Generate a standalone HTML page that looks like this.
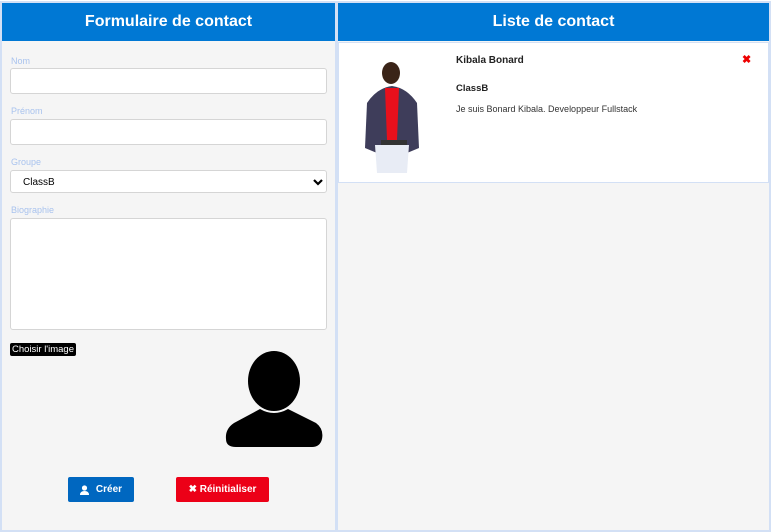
<!DOCTYPE html>
<html><head><meta charset="utf-8"><style>
*{box-sizing:border-box;margin:0;padding:0}
body{width:777px;height:532px;background:#fff;font-family:"Liberation Sans",sans-serif;position:relative;overflow:hidden}
.panel{position:absolute;top:1px;background:#f5f5f5;border:2px solid #d3e0f5}
.hdr{background:#0078d4;color:#fff;font-weight:bold;font-size:16px;text-align:center;height:38px;line-height:38px}
.lbl{position:absolute;left:9px;font-size:9px;color:#a9c3ee}
.inp{position:absolute;left:8px;width:317px;background:#fff;border:1px solid #d5d5d5;border-radius:3px}
.btn{position:absolute;top:474px;height:25px;color:#fff;font-size:10px;font-weight:bold;border-radius:2px;display:flex;align-items:center;justify-content:center;gap:7px}
</style></head><body>
<div class="panel" style="left:0;width:337px;height:531px">
 <div class="hdr">Formulaire de contact</div>
 <div class="lbl" style="top:53px">Nom</div>
 <div class="inp" style="top:65px;height:26px"></div>
 <div class="lbl" style="top:103px">Prénom</div>
 <div class="inp" style="top:116px;height:26px"></div>
 <div class="lbl" style="top:154px">Groupe</div>
 <div class="inp" style="top:167px;height:23px;font-size:10px;padding:6px 12px">ClassB
  <svg style="position:absolute;right:3px;top:7px" width="10" height="8" viewBox="0 0 10 8"><path d="M1 2 L5 6 L9 2" stroke="#000" stroke-width="2.2" fill="none"/></svg></div>
 <div class="lbl" style="top:202px">Biographie</div>
 <div class="inp" style="top:215px;height:112px"></div>
 <div style="position:absolute;left:8px;top:340px;background:#000;color:#fff;font-size:9.5px;padding:1px 2px;border-radius:2px">Choisir l'image</div>
 <svg style="position:absolute;left:218px;top:340px" width="108" height="114" viewBox="0 0 108 114">
  <ellipse cx="54" cy="38" rx="26" ry="30" fill="#000"/>
  <path d="M40 66 Q54 74 68 66 L96 80 Q104 86 102 96 Q100 104 92 104 L16 104 Q6 104 6 96 Q5 86 14 80 Z" fill="#000"/>
 </svg>
 <div class="btn" style="left:66px;width:66px;background:#0067c0"><svg width="9" height="10" viewBox="0 0 9 10"><circle cx="4.5" cy="3" r="2.6" fill="#fff"/><path d="M0 10 Q0 6 4.5 6 Q9 6 9 10 Z" fill="#fff"/></svg>Créer</div>
 <div class="btn" style="left:174px;width:93px;background:#ec0017">✖ Réinitialiser</div>
</div>
<div class="panel" style="left:336px;width:435px;height:531px">
 <div class="hdr">Liste de contact</div>
 <div style="position:absolute;left:0;top:39px;width:431px;height:141px;background:#fff;border:1px solid #d3e0f5">
  <svg style="position:absolute;left:18px;top:15px" width="70" height="115" viewBox="0 0 70 115">
   <path d="M10 45 Q20 30 35 28 Q50 30 60 45 L62 90 L50 95 L20 95 L8 90 Z" fill="#3e3d5a"/>
   <path d="M28 30 L42 30 L40 82 L30 82 Z" fill="#e8101c"/>
   <rect x="24" y="82" width="26" height="5" fill="#333"/>
   <path d="M18 87 L52 87 L50 115 L20 115 Z" fill="#e8ecf5"/>
   <ellipse cx="34" cy="15" rx="9" ry="11" fill="#3a2418"/>
  </svg>
  <div style="position:absolute;left:117px;top:12px;font-size:10px;font-weight:bold;color:#222">Kibala Bonard</div>
  <div style="position:absolute;left:117px;top:40px;font-size:9.5px;font-weight:bold;color:#222">ClassB</div>
  <div style="position:absolute;left:117px;top:61px;font-size:9px;color:#333">Je suis Bonard Kibala. Developpeur Fullstack</div>
  <div style="position:absolute;left:403px;top:10px;font-size:11px;color:#e00;font-weight:bold">✖</div>
 </div>
</div>
</body></html>
